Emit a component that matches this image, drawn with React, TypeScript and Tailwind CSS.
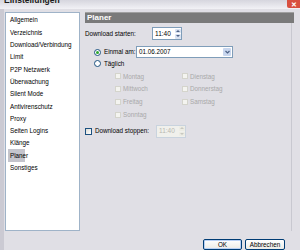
import React from "react";

const font = { fontFamily: '"Liberation Sans", Arial, sans-serif' };

function Spinner({ disabled }: { disabled?: boolean }) {
  return (
    <div
      className={`flex h-[13px] w-[30px] items-stretch border ${
        disabled ? "border-[#c9d3de] bg-[#f0f0ec]" : "border-[#7f9db9] bg-white"
      }`}
    >
      <div
        className={`flex flex-1 items-center pl-[2px] text-[6.5px] ${
          disabled ? "text-[#b8b8b0]" : "text-black"
        }`}
      >
        11:40
      </div>
      <div className="flex w-[7px] flex-col gap-[1px] p-[0.5px]">
        <div
          className={`flex flex-1 items-center justify-center rounded-[1px] ${
            disabled ? "bg-[#ecece4]" : "bg-[#d8e2f2]"
          }`}
        >
          <div
            className={`h-0 w-0 border-x-[2px] border-b-[2px] border-x-transparent ${
              disabled ? "border-b-[#c8c8c0]" : "border-b-[#4d6185]"
            }`}
          />
        </div>
        <div
          className={`flex flex-1 items-center justify-center rounded-[1px] ${
            disabled ? "bg-[#ecece4]" : "bg-[#d8e2f2]"
          }`}
        >
          <div
            className={`h-0 w-0 border-x-[2px] border-t-[2px] border-x-transparent ${
              disabled ? "border-t-[#c8c8c0]" : "border-t-[#4d6185]"
            }`}
          />
        </div>
      </div>
    </div>
  );
}

function Radio({ checked, label }: { checked?: boolean; label: string }) {
  return (
    <div className="flex items-center gap-[3px]">
      <div className="flex h-[7px] w-[7px] items-center justify-center rounded-full border border-[#1c5180] bg-white">
        {checked && <div className="h-[3px] w-[3px] rounded-full bg-[#2fa82f]" />}
      </div>
      <span className="text-[6.3px] text-black">{label}</span>
    </div>
  );
}

function DisCheck({ label }: { label: string }) {
  return (
    <div className="flex h-[12.8px] items-center gap-[2px]">
      <div className="h-[6px] w-[6px] border border-[#d4d4cc] bg-[#f4f4f0]" />
      <span className="text-[6.3px] text-[#a9a9a9]">{label}</span>
    </div>
  );
}

export default function App() {
  const items = [
    "Allgemein",
    "Verzeichnis",
    "Download/Verbindung",
    "Limit",
    "P2P Netzwerk",
    "Überwachung",
    "Silent Mode",
    "Antivirenschutz",
    "Proxy",
    "Seiten Logins",
    "Klänge",
    "Planer",
    "Sonstiges",
  ];
  return (
    <div
      className="relative h-[250px] w-[300px] overflow-hidden bg-[#e0dfe5]"
      style={font}
    >
      {/* title bar */}
      <div className="flex h-[9px] items-start justify-between bg-gradient-to-b from-[#d6d6de] to-[#f2f2f6]">
        <span className="-mt-[5px] pl-[4px] text-[8.5px] font-bold leading-[10px] text-[#1a1a1a]">
          Einstellungen
        </span>
        <div className="flex h-[8px] w-[13px] items-center justify-center rounded-bl-[2px] bg-[#d85040] text-[7px] font-bold leading-none text-white">
          ✕
        </div>
      </div>
      <div className="flex h-[241px] border-l-[4px] border-[#cbcad3]">
        <div className="flex flex-col">
          <div className="mt-[3px] flex">
            {/* list */}
            <div className="ml-[1px] h-[219px] w-[75px] border border-[#9fb3c8] bg-white pt-[1px]">
              {items.map((it) => (
                <div
                  key={it}
                  className={`mx-[2px] flex h-[12.3px] items-center pl-[2px] text-[6.3px] ${
                    it === "Planer" ? "w-[17px] bg-[#c4c4cc] text-black" : "text-black"
                  }`}
                >
                  {it}
                </div>
              ))}
            </div>
            {/* right panel */}
            <div className="ml-[5px] flex w-[207px] flex-col border-r border-[#c8c8d0] pr-[2px]">
              <div className="flex h-[11px] w-[209px] items-center border-t border-[#a0a0a0] bg-[#7a7a7a] pl-[2px] text-[8px] font-bold text-white">
                Planer
              </div>
              <div className="mt-[4px] flex h-[13px] items-center">
                <span className="w-[67px] text-[6.3px] text-black">Download starten:</span>
                <Spinner />
              </div>
              <div className="mt-[6px] flex h-[12px] items-center">
                <div className="w-[51px] pl-[9px]">
                  <Radio checked label="Einmal am:" />
                </div>
                <div className="flex h-[12px] w-[97px] items-stretch border border-[#7f9db9] bg-white">
                  <span className="flex flex-1 items-center pl-[2px] text-[6.3px] text-black">
                    01.06.2007
                  </span>
                  <div className="m-[1px] flex w-[8px] items-center justify-center rounded-[1px] bg-[#c8d6ee]">
                    <svg width="5" height="4" viewBox="0 0 5 4">
                      <path d="M0.5 1 L2.5 3 L4.5 1" stroke="#4d6185" strokeWidth="1.2" fill="none" />
                    </svg>
                  </div>
                </div>
              </div>
              <div className="flex h-[11px] items-center pl-[9px]">
                <Radio label="Täglich" />
              </div>
              <div className="mt-[1px] grid w-[140px] grid-cols-[67px_67px] pl-[30px]">
                <DisCheck label="Montag" />
                <DisCheck label="Dienstag" />
                <DisCheck label="Mittwoch" />
                <DisCheck label="Donnerstag" />
                <DisCheck label="Freitag" />
                <DisCheck label="Samstag" />
                <DisCheck label="Sonntag" />
              </div>
              <div className="mt-[3px] flex h-[14px] items-center">
                <div className="flex w-[71px] items-center gap-[3px]">
                  <div className="h-[7px] w-[7px] border border-[#1c5180] bg-gradient-to-br from-[#dcdcd6] to-white" />
                  <span className="text-[6.3px] text-black">Download stoppen:</span>
                </div>
                <Spinner disabled />
              </div>
            </div>
          </div>
          <div className="mt-[8px] flex justify-end gap-[3px] pr-[7px]">
            <div className="flex h-[11px] w-[39px] items-center justify-center rounded-[2px] border border-[#003c74] bg-gradient-to-b from-white to-[#ecebe6] text-[6.3px] text-black shadow-[inset_0_0_0_1px_#b9d0f4]">
              OK
            </div>
            <div className="flex h-[11px] w-[40px] items-center justify-center rounded-[2px] border border-[#003c74] bg-gradient-to-b from-white to-[#ecebe6] text-[6.3px] text-black">
              Abbrechen
            </div>
          </div>
        </div>
      </div>
    </div>
  );
}
